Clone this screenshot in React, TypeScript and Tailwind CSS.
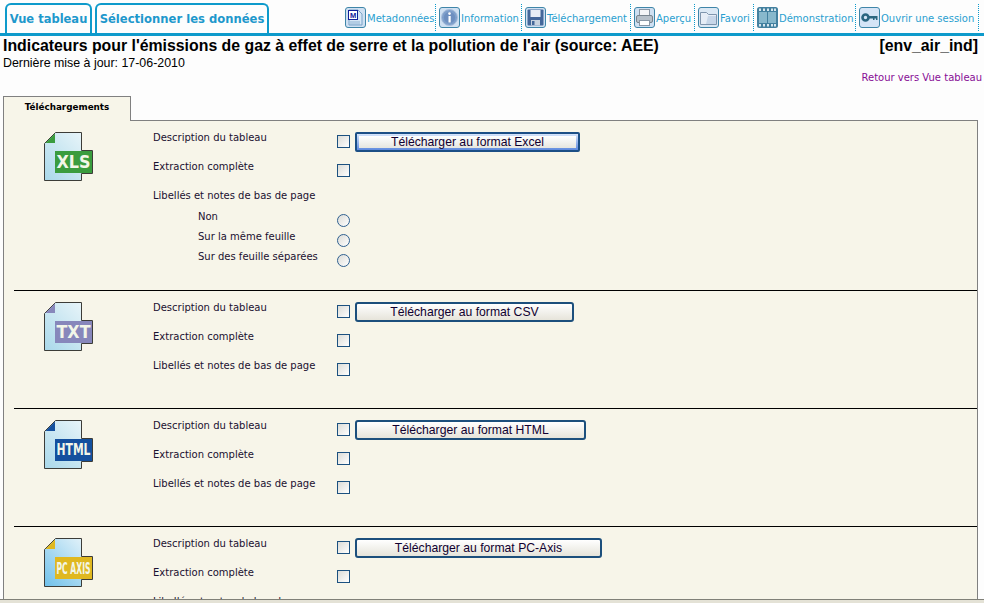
import React from "react";

const Ico = ({ children, bg = "#cfe0f2" }: { children: React.ReactNode; bg?: string }) => (
  <svg width="21" height="21" viewBox="0 0 21 21" className="shrink-0">
    <rect x="0.5" y="0.5" width="20" height="20" rx="2.5" fill={bg} stroke="#3f85a8" />
    {children}
  </svg>
);

const MetaIcon = () => (
  <Ico>
    <path d="M4 3h9l4 4v11H4z" fill="#d6e6f5" stroke="#7aa3c8" />
    <rect x="3.5" y="3.5" width="9" height="9" fill="#fff" stroke="#10209a" />
    <text x="8" y="11" fontSize="7.5" fontWeight="700" textAnchor="middle" fill="#10209a" fontFamily="'Liberation Sans',sans-serif">M</text>
    <path d="M5 15h10M5 17h10" stroke="#8fb2d2" />
  </Ico>
);
const InfoIcon = () => (
  <Ico>
    <circle cx="10.5" cy="10.5" r="8" fill="#7e9fcb" stroke="#a9bedb" />
    <circle cx="10.5" cy="10.5" r="5.6" fill="#6d8fc0" />
    <circle cx="10.5" cy="6.6" r="1.3" fill="#fff" />
    <rect x="9.5" y="9" width="2.2" height="6.5" fill="#fff" />
  </Ico>
);
const SaveIcon = () => (
  <Ico>
    <rect x="2.5" y="2.5" width="16" height="16" rx="1" fill="#44679a" />
    <rect x="5.5" y="3" width="10" height="7" fill="#e8eef6" />
    <rect x="6" y="13" width="9" height="5.5" fill="#c8d2df" />
    <rect x="7" y="14" width="2.5" height="4" fill="#44679a" />
  </Ico>
);
const PrintIcon = () => (
  <Ico>
    <rect x="5.5" y="2.5" width="10" height="7" fill="#f3f5f7" stroke="#8a97a5" />
    <rect x="2.5" y="8.5" width="16" height="7" rx="1.5" fill="#b6c0c9" stroke="#78858f" />
    <rect x="5.5" y="13.5" width="10" height="5" fill="#fff" stroke="#8a97a5" />
  </Ico>
);
const FolderIcon = () => (
  <Ico bg="#dbe8f4">
    <path d="M2.5 5.5h6l2 2h8v10h-16z" fill="#e6edf6" stroke="#7f95ad" />
    <path d="M10 9h8v8h-10z" fill="#c7d6e8" />
  </Ico>
);
const FilmIcon = () => (
  <svg width="21" height="21" viewBox="0 0 21 21" className="shrink-0">
    <rect x="0" y="0" width="21" height="21" rx="2.5" fill="#43809f" />
    <rect x="2" y="5" width="8" height="11" fill="#88b8cc" />
    <rect x="11" y="5" width="8" height="11" fill="#88b8cc" />
    {[2, 6, 10, 14, 17].map((x) => (
      <React.Fragment key={x}>
        <rect x={x} y="1.5" width="2" height="2.5" fill="#d6e6ee" />
        <rect x={x} y="17" width="2" height="2.5" fill="#d6e6ee" />
      </React.Fragment>
    ))}
  </svg>
);
const KeyIcon = () => (
  <Ico bg="#d5e4f6">
    <circle cx="6.5" cy="10.5" r="3" fill="none" stroke="#2c6680" strokeWidth="2.6" />
    <path d="M9.5 9H18.5V13H17V11.5H15.5V13H14V11.5H9.5z" fill="#2c6680" />
  </Ico>
);

const tools: { label: string; icon: React.ReactNode; w: string; pl: string }[] = [
  { label: "Metadonnées", icon: <MetaIcon />, w: "w-[92px]", pl: "pl-[1px]" },
  { label: "Information", icon: <InfoIcon />, w: "w-[86px]", pl: "pl-[3px]" },
  { label: "Téléchargement", icon: <SaveIcon />, w: "w-[109px]", pl: "pl-[3px]" },
  { label: "Aperçu", icon: <PrintIcon />, w: "w-[64px]", pl: "pl-[3px]" },
  { label: "Favori", icon: <FolderIcon />, w: "w-[59px]", pl: "pl-[3px]" },
  { label: "Démonstration", icon: <FilmIcon />, w: "w-[102px]", pl: "pl-[3px]" },
  { label: "Ouvrir une session", icon: <KeyIcon />, w: "w-[123px]", pl: "pl-[3px]" },
];

const verdana = "font-['DejaVu_Sans',sans-serif]";

const FileIcon = ({ color, text, paper, fs = 17, y = 35.5 }: { color: string; text: string; paper: string; fs?: number; y?: number }) => {
  const id = "g" + text.replace(" ", "");
  return (
    <svg width="50" height="50" viewBox="0 0 50 50" className="overflow-visible">
      <defs>
        <linearGradient id={id} x1="0" y1="1" x2="1" y2="0">
          <stop offset="0" stopColor={paper} />
          <stop offset="1" stopColor="#f0f8fb" />
        </linearGradient>
      </defs>
      <path d="M11.5 .5H37.5V18.5H48.5V41.5H37.5V48.5H.5V11.5z" fill={`url(#${id})`} stroke="#3c3c38" />
      <path d="M11 1.5V11H1.5z" fill={color} />
      <rect x="11" y="19" width="37" height="22" fill={color} />
      <text x="12.5" y={y} fontSize={fs} fontWeight="700" textLength="34" lengthAdjust="spacingAndGlyphs" fill="#f2f6e8" fontFamily="'DejaVu Sans',sans-serif">
        {text}
      </text>
    </svg>
  );
};

const Check = () => (
  <span className="block h-[13px] w-[13px] border border-[#1c5180] bg-gradient-to-br from-[#dcdcd7] to-[#ffffff]" />
);
const Radio = () => (
  <span className="block h-[13px] w-[13px] rounded-full border border-[#2f6090] bg-gradient-to-br from-[#dcdcd7] to-[#ffffff]" />
);

const Row = ({ label, h, indent, control }: { label: string; h: string; indent?: boolean; control?: React.ReactNode }) => (
  <div className={`flex ${h}`}>
    <div className={`w-[184px] shrink-0 whitespace-nowrap pt-[1px] text-[10px] leading-[20px] text-[#1a1030] ${indent ? "pl-[45px]" : ""}`}>
      {label}
    </div>
    <div className="mt-[8px] shrink-0">{control}</div>
  </div>
);

const DownloadButton = ({ label, w, focus }: { label: string; w: string; focus?: boolean }) =>
  focus ? (
    <button className={`${w} ml-[5px] h-[20px] rounded-[2px] border-2 border-[#1c4f86] bg-gradient-to-b from-[#d6e4fa] to-[#5f8ade] p-[2px] font-['Liberation_Sans',sans-serif] text-[12.2px] leading-none text-[#100030]`}>
      <span className="flex h-full items-center justify-center bg-gradient-to-b from-[#ffffff] to-[#e6e6e0]">{label}</span>
    </button>
  ) : (
    <button className={`${w} ml-[5px] h-[20px] rounded-[3px] border-2 border-[#1c4f7c] bg-gradient-to-b from-[#ffffff] to-[#e6e4da] font-['Liberation_Sans',sans-serif] text-[12.2px] leading-none text-[#100030]`}>
      {label}
    </button>
  );

const Section = ({
  icon,
  button,
  radios,
  h,
  border = true,
}: {
  icon: React.ReactNode;
  button: React.ReactNode;
  radios?: boolean;
  h: string;
  border?: boolean;
}) => (
  <div className={`flex ${h} pt-[6px] ${border ? "border-b border-[#000000]" : ""}`}>
    <div className="w-[139px] shrink-0 pl-[30px] pt-[5px]">{icon}</div>
    <div className="flex flex-col">
      <div className="flex h-[29px]">
        <Row label="Description du tableau" h="h-[29px]" control={<Check />} />
        <div className="mt-[5px] flex h-[20px]">{button}</div>
      </div>
      <Row label="Extraction complète" h="h-[29px]" control={<Check />} />
      <Row label="Libellés et notes de bas de page" h={radios ? "h-[21px]" : "h-[29px]"} control={radios ? undefined : <Check />} />
      {radios && (
        <>
          <Row indent label="Non" h="h-[20px]" control={<Radio />} />
          <Row indent label="Sur la même feuille" h="h-[20px]" control={<Radio />} />
          <Row indent label="Sur des feuille séparées" h="h-[20px]" control={<Radio />} />
        </>
      )}
    </div>
  </div>
);

export default function App() {
  return (
    <div className={`flex h-[603px] w-[984px] flex-col overflow-hidden bg-[#fdfdfd] ${verdana}`}>
      <header className="flex h-[36px] shrink-0 items-end border-b-[3px] border-[#0d9acb] pl-[5px] pr-[5px]">
        <div className="flex h-[30px] items-stretch gap-[3px]">
          <div className="flex w-[87px] items-center justify-center whitespace-nowrap rounded-t-[6px] border-2 border-b-0 border-[#0d9acb] pt-[1px] text-[11.5px] font-bold text-[#1e98cc]">
            Vue tableau
          </div>
          <div className="flex w-[174px] items-center justify-center whitespace-nowrap rounded-t-[6px] border-2 border-b-0 border-[#0d9acb] pt-[1px] text-[11.6px] font-bold text-[#1e98cc]">
            Sélectionner les données
          </div>
        </div>
        <nav className="ml-auto flex h-[27px] -translate-y-[2px] items-center">
          {tools.map((t) => (
            <div
              key={t.label}
              className={`${t.w} ${t.pl} flex h-full items-center gap-[1px] border-r border-dotted border-[#0d9acb]`}
            >
              {t.icon}
              <span className="mt-[2px] whitespace-nowrap text-[10px] text-[#2a9fd0]">{t.label}</span>
            </div>
          ))}
        </nav>
      </header>

      <div className="flex shrink-0 items-start justify-between pl-[3px] pr-[6px] pt-[1px] font-['Liberation_Sans',sans-serif]">
        <div>
          <h1 className="text-[15.85px] font-bold leading-[18px] text-black">
            Indicateurs pour l'émissions de gaz à effet de serre et la pollution de l'air (source: AEE)
          </h1>
          <p className="text-[12.4px] leading-[16px] text-black">Dernière mise à jour: 17-06-2010</p>
        </div>
        <div className="text-[15.85px] font-bold leading-[18px] text-black">[env_air_ind]</div>
      </div>

      <div className="-mt-[1px] flex h-[16px] shrink-0 justify-end pr-[2px] text-[10px] leading-[16px] text-[#880e96]">
        Retour vers Vue tableau
      </div>

      <div className="relative z-10 ml-[3px] mt-[10px] flex h-[25px] w-[128px] shrink-0 -mb-px items-start justify-center border border-b-0 border-[#808080] bg-[#f7f5e9] pt-[3px] text-[8.8px] font-bold leading-[14px] text-black">
        Téléchargements
      </div>

      <main className="ml-[3px] mr-[6px] min-h-0 flex-1 overflow-hidden border-x border-t border-[#808080] bg-[#f7f5e9] pl-[10px]">
        <Section h="h-[170px]" radios icon={<FileIcon color="#3a9c3e" text="XLS" paper="#a9d8ea" />} button={<DownloadButton focus w="w-[225px]" label="Télécharger au format Excel" />} />
        <Section h="h-[118px]" icon={<FileIcon color="#8787bb" text="TXT" paper="#a9d8ea" />} button={<DownloadButton w="w-[219px]" label="Télécharger au format CSV" />} />
        <Section h="h-[118px]" icon={<FileIcon color="#14509e" text="HTML" paper="#a9d8ea" fs={15} y={35} />} button={<DownloadButton w="w-[231px]" label="Télécharger au format HTML" />} />
        <Section h="h-[100px]" border={false} icon={<FileIcon color="#e0b820" text="PC AXIS" paper="#6fc0ea" fs={16} y={35.5} />} button={<DownloadButton w="w-[247px]" label="Télécharger au format PC-Axis" />} />
      </main>

      <footer className="h-[4px] shrink-0 border-t border-[#808078] bg-[#e4e2d6]" />
    </div>
  );
}
